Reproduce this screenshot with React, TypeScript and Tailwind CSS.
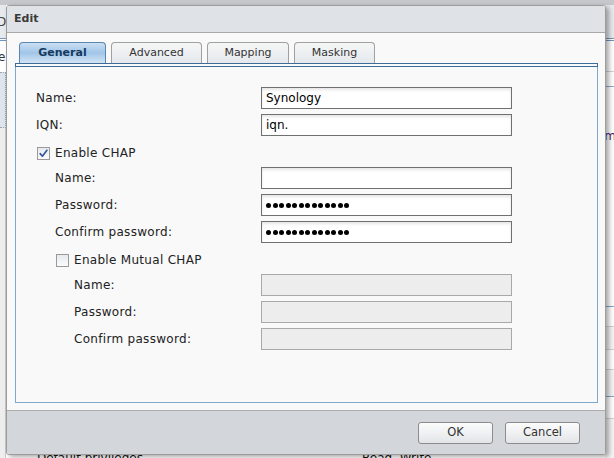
import React from "react";

const Check = () => (
  <svg width="13" height="13" viewBox="0 0 13 13" className="block">
    <path d="M3.2 6.6 L5.4 9.2 L9.9 3.3" fill="none" stroke="#35589a" strokeWidth="1.7" strokeLinecap="round" strokeLinejoin="round" />
  </svg>
);

function Checkbox({ checked }: { checked: boolean }) {
  return (
    <div className="w-[13px] h-[13px] border border-[#9a9a9a] bg-gradient-to-b from-[#e6eaee] to-[#fbfbfb] flex items-center justify-center shrink-0">
      {checked ? <div className="-m-px"><Check /></div> : null}
    </div>
  );
}

function Field({ text, dots, disabled }: { text?: string; dots?: number; disabled?: boolean }) {
  if (disabled) {
    return <div className="w-[251px] h-[22px] border border-[#a9a9a9] bg-[#ededed]" />;
  }
  return (
    <div className="w-[251px] h-[22px] border border-[#707070] bg-white shadow-[inset_0_2px_3px_rgba(0,0,0,0.10)] flex items-center pl-[4px] text-[12px] text-black">
      {text}
      {dots ? (
        <div className="flex gap-[1.5px] items-center">
          {Array.from({ length: dots }).map((_, i) => (
            <div key={i} className="w-[5px] h-[5px] rounded-full bg-black" />
          ))}
        </div>
      ) : null}
    </div>
  );
}

function Row({ label, indent, children }: { label: string; indent: number; children: React.ReactNode }) {
  return (
    <div className="flex items-center h-[22px]">
      <div
        className={
          "w-[225px] text-[12px] tracking-[0.3px] text-[#222] " +
          (indent === 0 ? "pl-0" : indent === 1 ? "pl-[19px]" : "pl-[38px]")
        }
      >
        {label}
      </div>
      {children}
    </div>
  );
}

function CheckRow({ label, checked, indent }: { label: string; checked: boolean; indent: number }) {
  return (
    <div className={"flex items-center h-[21px] pt-[3px] gap-[5px] " + (indent === 0 ? "pl-[1px]" : "pl-[20px]")}>
      <Checkbox checked={checked} />
      <span className="text-[12px] tracking-[0.3px] text-[#222]">{label}</span>
    </div>
  );
}

function Tab({ label, active, w }: { label: string; active?: boolean; w: string }) {
  if (active) {
    return (
      <div
        className={
          w +
          " h-[21px] pt-[1px] rounded-t-[4px] border border-b-0 border-[#5a86b2] bg-gradient-to-b from-[#cadff2] via-[#a1c5e8] to-[#d3e5f5] flex items-center justify-center text-[11px] font-bold text-[#173a5e]"
        }
      >
        {label}
      </div>
    );
  }
  return (
    <div
      className={
        w +
        " h-[21px] pt-[1px] rounded-t-[4px] border border-b-0 border-[#a0a0a0] bg-gradient-to-b from-[#f6f6f6] to-[#e4e9ee] flex items-center justify-center text-[11px] text-[#333]"
      }
    >
      {label}
    </div>
  );
}

function Button({ label }: { label: string }) {
  return (
    <div className="w-[75px] h-[22px] rounded-[3px] border border-[#8c8c8c] bg-gradient-to-b from-[#fcfcfc] to-[#e2e5e8] flex items-center justify-center text-[11.5px] text-[#333]">
      {label}
    </div>
  );
}

function Background() {
  return (
    <div className="flex w-full h-full">
      <div className="w-[6px] flex flex-col overflow-hidden shrink-0">
        <div className="h-[5px] bg-[#c5c9cd]" />
        <div className="h-[33px] bg-[#e7eaed] flex items-center">
          <span className="-ml-[3px] text-[12px] text-[#444]">D</span>
        </div>
        <div className="h-[3px] border-y border-[#7097bd] bg-white" />
        <div className="h-[31px] bg-white flex items-center">
          <span className="-ml-[2px] text-[12px] text-[#333]">e</span>
        </div>
        <div className="h-[56px] bg-[#dfe5ec] border-y border-r border-dotted border-[#9aa5b1]" />
        <div className="flex-1 bg-[#eeeeee] border-r border-[#c9c9c9]" />
      </div>
      <div className="flex-1 flex flex-col overflow-hidden bg-white">
        <div className="h-[5px] bg-[#c5c9cd] shrink-0" />
        <div className="h-[443px] shrink-0" />
        <div className="h-[20px] shrink-0 flex items-center text-[12px] text-[#111] pl-[31px]">
          <span className="w-[325px]">Default privileges</span>
          <span>Read, Write</span>
        </div>
      </div>
      <div className="w-[9px] flex flex-col overflow-hidden shrink-0">
        <div className="h-[5px] bg-[#c5c9cd]" />
        <div className="h-[33px] bg-[#e7eaed]" />
        <div className="h-[3px] border-y border-[#7097bd] bg-white" />
        <div className="h-[31px] bg-white border-b border-[#cfd3d7]" />
        <div className="h-[15px] bg-white border-b border-[#88aed0]" />
        <div className="h-[219px] bg-white pt-[42px] flex justify-end">
          <span className="-mr-[2px] text-[12px] leading-[14px] text-[#4b1d6e]">m</span>
        </div>
        <div className="h-[20px] border-t border-[#7fa6ca] bg-white" />
        <div className="h-[23px] border-t border-[#d2d2d2] bg-[#f4f4f4]" />
        <div className="h-[20px] border-t border-[#d2d2d2] bg-white" />
        <div className="h-[27px] border-t border-[#d2d2d2] bg-[#f4f4f4]" />
        <div className="h-[22px] border-t border-[#7fa6ca] bg-white" />
        <div className="flex-1 border-t border-[#d2d2d2] bg-[#f4f4f4]" />
      </div>
    </div>
  );
}

export default function App() {
  return (
    <div className="relative w-[614px] h-[458px] overflow-hidden bg-white font-['DejaVu_Sans',sans-serif]">
      <Background />
      <div className="absolute left-[6px] top-[5px] w-[600px] h-[450px] flex flex-col rounded-[3px] border border-[#9c9c9c] bg-[#f9f9f9] shadow-[3px_2px_5px_rgba(0,0,0,0.35)] overflow-hidden">
        <div className="h-[27px] shrink-0 border-b border-[#a9a9a9] bg-[#dfe3e7] flex items-center pl-[7px] text-[11px] font-bold text-[#3a3a3a]">
          Edit
        </div>
        <div className="flex-1 flex flex-col pt-[9px] pl-[8px] pr-[7px] pb-[7px]">
          <div className="h-[21px] flex gap-[5px] pl-[4px] shrink-0">
            <Tab label="General" active w="w-[87px]" />
            <Tab label="Advanced" w="w-[91px]" />
            <Tab label="Mapping" w="w-[82px]" />
            <Tab label="Masking" w="w-[81px]" />
          </div>
          <div className="h-[4px] shrink-0 border border-[#3c6c99] bg-[#f9f9f9]" />
          <div className="flex-1 border-x border-b border-[#80a8cc] pt-[20px] pl-[20px] flex flex-col gap-[5px]">
            <Row label="Name:" indent={0}>
              <Field text="Synology" />
            </Row>
            <Row label="IQN:" indent={0}>
              <Field text="iqn." />
            </Row>
            <CheckRow label="Enable CHAP" checked indent={0} />
            <Row label="Name:" indent={1}>
              <Field />
            </Row>
            <Row label="Password:" indent={1}>
              <Field dots={13} />
            </Row>
            <Row label="Confirm password:" indent={1}>
              <Field dots={13} />
            </Row>
            <CheckRow label="Enable Mutual CHAP" checked={false} indent={1} />
            <Row label="Name:" indent={2}>
              <Field disabled />
            </Row>
            <Row label="Password:" indent={2}>
              <Field disabled />
            </Row>
            <Row label="Confirm password:" indent={2}>
              <Field disabled />
            </Row>
          </div>
        </div>
        <div className="h-[44px] shrink-0 border-t border-[#adadad] bg-[#d3d7db] flex justify-end items-start pt-[11px] pr-[25px] gap-[12px]">
          <Button label="OK" />
          <Button label="Cancel" />
        </div>
      </div>
    </div>
  );
}
